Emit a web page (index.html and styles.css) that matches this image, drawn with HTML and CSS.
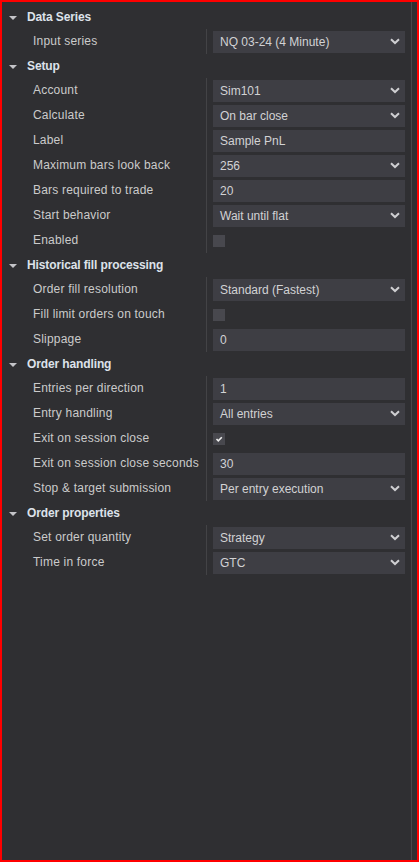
FILE: index.html
```html
<!DOCTYPE html>
<html>
<head>
<meta charset="utf-8">
<link rel="stylesheet" href="styles.css">
</head>
<body>
<div class="panel">
  <div class="list">
    <div class="group">
      <div class="head"><span class="tri"></span>Data Series</div>
      <div class="body">
        <div class="lbl">Input series</div><div class="val"><div class="box sel"><span>NQ 03-24 (4 Minute)</span><svg class="chev" viewBox="0 0 10 7"><polyline points="1,1.2 5,5 9,1.2"/></svg></div></div>
      </div>
    </div>
    <div class="group">
      <div class="head"><span class="tri"></span>Setup</div>
      <div class="body">
        <div class="lbl">Account</div><div class="val"><div class="box sel"><span>Sim101</span><svg class="chev" viewBox="0 0 10 7"><polyline points="1,1.2 5,5 9,1.2"/></svg></div></div>
        <div class="lbl">Calculate</div><div class="val"><div class="box sel"><span>On bar close</span><svg class="chev" viewBox="0 0 10 7"><polyline points="1,1.2 5,5 9,1.2"/></svg></div></div>
        <div class="lbl">Label</div><div class="val"><div class="box"><span>Sample PnL</span></div></div>
        <div class="lbl">Maximum bars look back</div><div class="val"><div class="box sel"><span>256</span><svg class="chev" viewBox="0 0 10 7"><polyline points="1,1.2 5,5 9,1.2"/></svg></div></div>
        <div class="lbl">Bars required to trade</div><div class="val"><div class="box"><span>20</span></div></div>
        <div class="lbl">Start behavior</div><div class="val"><div class="box sel"><span>Wait until flat</span><svg class="chev" viewBox="0 0 10 7"><polyline points="1,1.2 5,5 9,1.2"/></svg></div></div>
        <div class="lbl">Enabled</div><div class="val"><div class="check"></div></div>
      </div>
    </div>
    <div class="group">
      <div class="head"><span class="tri"></span>Historical fill processing</div>
      <div class="body">
        <div class="lbl">Order fill resolution</div><div class="val"><div class="box sel"><span>Standard (Fastest)</span><svg class="chev" viewBox="0 0 10 7"><polyline points="1,1.2 5,5 9,1.2"/></svg></div></div>
        <div class="lbl">Fill limit orders on touch</div><div class="val"><div class="check"></div></div>
        <div class="lbl">Slippage</div><div class="val"><div class="box"><span>0</span></div></div>
      </div>
    </div>
    <div class="group">
      <div class="head"><span class="tri"></span>Order handling</div>
      <div class="body">
        <div class="lbl">Entries per direction</div><div class="val"><div class="box"><span>1</span></div></div>
        <div class="lbl">Entry handling</div><div class="val"><div class="box sel"><span>All entries</span><svg class="chev" viewBox="0 0 10 7"><polyline points="1,1.2 5,5 9,1.2"/></svg></div></div>
        <div class="lbl">Exit on session close</div><div class="val"><div class="check"><svg class="tick" viewBox="0 0 12 12"><polyline points="3.5,6 5.3,7.8 8.8,4.2"/></svg></div></div>
        <div class="lbl">Exit on session close seconds</div><div class="val"><div class="box"><span>30</span></div></div>
        <div class="lbl">Stop &amp; target submission</div><div class="val"><div class="box sel"><span>Per entry execution</span><svg class="chev" viewBox="0 0 10 7"><polyline points="1,1.2 5,5 9,1.2"/></svg></div></div>
      </div>
    </div>
    <div class="group">
      <div class="head"><span class="tri"></span>Order properties</div>
      <div class="body">
        <div class="lbl">Set order quantity</div><div class="val"><div class="box sel"><span>Strategy</span><svg class="chev" viewBox="0 0 10 7"><polyline points="1,1.2 5,5 9,1.2"/></svg></div></div>
        <div class="lbl">Time in force</div><div class="val"><div class="box sel"><span>GTC</span><svg class="chev" viewBox="0 0 10 7"><polyline points="1,1.2 5,5 9,1.2"/></svg></div></div>
      </div>
    </div>
  </div>
  <div class="track"></div>
</div>
</body>
</html>
```
FILE: styles.css
```css
html, body {
  margin: 0;
  padding: 0;
  background: #2f2f32;
}
.panel {
  box-sizing: border-box;
  width: 419px;
  height: 862px;
  border: 2px solid #ff0000;
  background: #2f2f32;
  display: flex;
  font-family: "Liberation Sans", Arial, sans-serif;
  font-size: 12px;
}
.list {
  width: 409px;
  padding-top: 3px;
}
.track {
  width: 5px;
  border-left: 1px solid #47474b;
}
.head {
  height: 24px;
  line-height: 24px;
  display: flex;
  align-items: center;
  padding-left: 7px;
  font-weight: bold;
  color: #dde2ea;
  letter-spacing: -0.12px;
}
.tri {
  width: 0;
  height: 0;
  border-left: 4px solid transparent;
  border-right: 4px solid transparent;
  border-top: 4px solid #c4c4c8;
  margin-right: 10px;
  margin-top: 1px;
}
.body {
  display: grid;
  grid-template-columns: 204px 1fr;
  grid-auto-rows: 25px;
}
.lbl {
  padding-left: 31px;
  line-height: 25px;
  color: #cbcbcb;
  letter-spacing: 0.2px;
  white-space: nowrap;
}
.val {
  border-left: 1px solid #434346;
  padding: 0 6px;
  display: flex;
  align-items: center;
}
.box {
  flex: 1;
  height: 22px;
  background: #3e3e44;
  display: flex;
  align-items: center;
  justify-content: space-between;
  padding: 0 5px 0 7px;
  color: #d2d2d4;
}
.chev {
  width: 10px;
  height: 7px;
  fill: none;
  stroke: #cfcfd2;
  stroke-width: 2;
}
.check {
  width: 12px;
  height: 12px;
  background: #48484e;
  display: flex;
}
.tick {
  width: 12px;
  height: 12px;
  fill: none;
  stroke: #f0f0f0;
  stroke-width: 1.6;
}
```
